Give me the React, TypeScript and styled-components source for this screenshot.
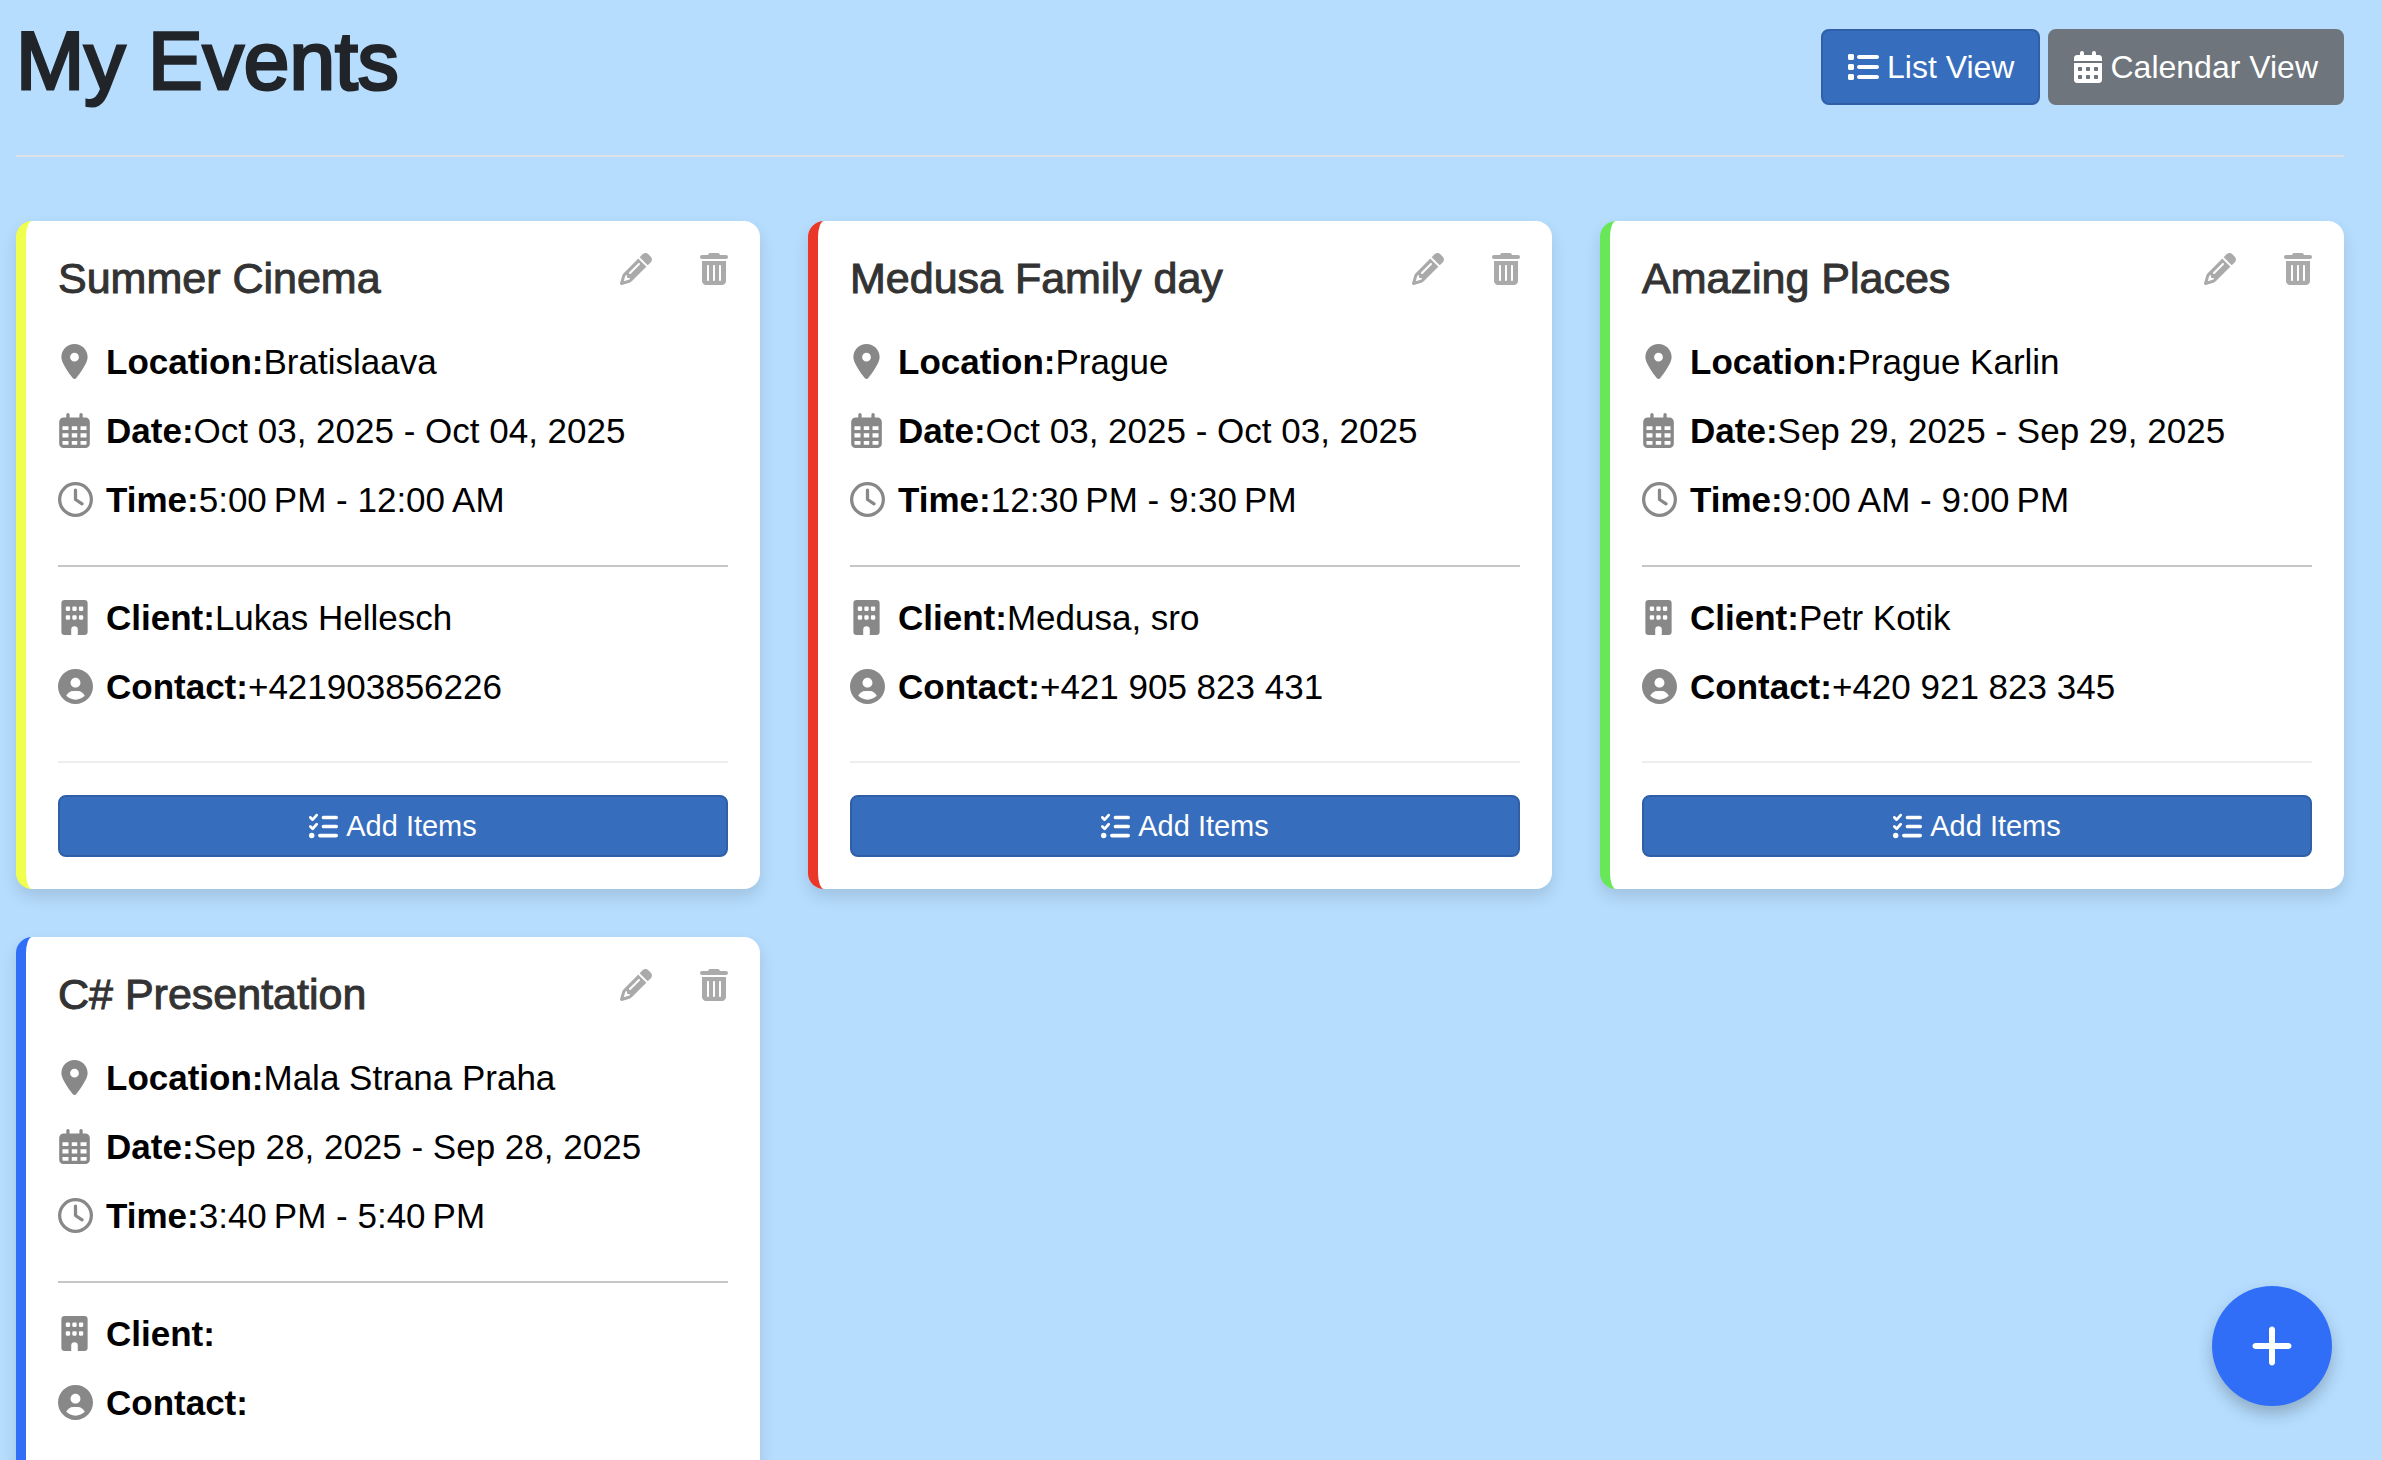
import React from "react";
import styled, { createGlobalStyle } from "styled-components";
import {
  FaCalendarDays,
  FaList,
  FaListCheck,
  FaLocationDot,
  FaPencil,
  FaPlus,
  FaRegClock,
  FaTrashCan,
} from "react-icons/fa6";

const GlobalStyle = createGlobalStyle`
  *, *::before, *::after { box-sizing: border-box; }
  html { background: #b6ddfe; overflow-x: hidden; }
  body {
    margin: 0;
    font-family: "Helvetica Neue", "Liberation Sans", Arial, sans-serif;
    color: #000;
  }
  button { font-family: inherit; cursor: pointer; }
`;

const Page = styled.main`
  padding: 16px 38px 48px 16px;
`;

const Header = styled.header`
  display: flex;
  justify-content: space-between;
  align-items: flex-start;
  padding-bottom: 49px;
  margin-bottom: 64px;
  border-bottom: 2px solid #dee2e6;
`;

const PageTitle = styled.h1`
  margin: 0;
  font-size: 82px;
  font-weight: 400;
  line-height: 90px;
  color: #212529;
  -webkit-text-stroke: 3px currentColor;
`;

const ViewSwitch = styled.div`
  display: flex;
  gap: 8px;
  padding-top: 13px;
`;

const Button = styled.button<{ $tone?: "primary" | "secondary"; $wide?: boolean }>`
  display: flex;
  align-items: center;
  justify-content: center;
  gap: 8px;
  width: ${(p) => (p.$wide ? "100%" : "auto")};
  height: ${(p) => (p.$wide ? 62 : 76)}px;
  padding: 0 ${(p) => (p.$wide ? 16 : 24)}px;
  border: 2px solid ${(p) => (p.$tone === "secondary" ? "#6e757c" : "#2f5fa8")};
  border-radius: 8px;
  background: ${(p) => (p.$tone === "secondary" ? "#6e757c" : "#366dbd")};
  color: #fff;
  font-size: ${(p) => (p.$wide ? 29 : 32)}px;
  line-height: 1;
  white-space: nowrap;

  svg {
    flex: none;
    width: ${(p) => (p.$tone === "secondary" ? "28px" : "1em")};
  }
`;

const Grid = styled.section`
  display: grid;
  grid-template-columns: repeat(auto-fill, minmax(600px, 1fr));
  gap: 48px;
`;

const Card = styled.article<{ $accent: string }>`
  padding: 32px;
  border-left: 10px solid ${(p) => p.$accent};
  border-radius: 16px;
  background: #fff;
  box-shadow: 0 8px 16px rgba(0, 0, 0, 0.12);
`;

const CardHead = styled.div`
  display: flex;
  justify-content: space-between;
  align-items: flex-start;
  margin-bottom: 32px;
`;

const CardTitle = styled.h2`
  margin: 0;
  font-size: 43px;
  font-weight: 400;
  line-height: 50px;
  color: #333;
  -webkit-text-stroke: 1px currentColor;
`;

const CardActions = styled.div`
  display: flex;
  gap: 48px;
`;

const IconButton = styled.button<{ $glyph: number }>`
  display: flex;
  padding: 0;
  border: 0;
  background: none;
  color: #aaa;
  font-size: 32px;

  svg { width: ${(p) => p.$glyph}px; }
`;

const Details = styled.div`
  display: flex;
  flex-direction: column;
  gap: 16px;
`;

const Row = styled.div`
  display: flex;
  align-items: center;
  gap: 16px;
  font-size: 35px;
  line-height: 53px;
`;

const RowIcon = styled.span<{ $round?: boolean }>`
  display: flex;
  flex: none;
  justify-content: ${(p) => (p.$round ? "flex-start" : "center")};
  width: 32px;
  color: #888;

  svg { flex: none; width: 1em; height: 1em; }
`;

const Divider = styled.hr`
  width: 100%;
  height: 2px;
  margin: 39px 0 24px;
  border: 0;
  background: #c6c6c6;
`;

const CardFooter = styled.div`
  margin-top: 48px;
  padding-top: 32px;
  border-top: 2px solid #eee;
`;

const AddButton = styled.button`
  position: fixed;
  right: 50px;
  bottom: 54px;
  display: flex;
  align-items: center;
  justify-content: center;
  width: 120px;
  height: 120px;
  padding: 0;
  border: 0;
  border-radius: 50%;
  background: #306ef7;
  color: #fff;
  font-size: 48px;
  box-shadow: 0 8px 16px rgba(0, 0, 0, 0.22);
`;

function CalendarGridIcon() {
  return (
    <svg viewBox="0 0 448 512" fill="currentColor" aria-hidden>
      <path d="M152 64H296V24C296 10.75 306.7 0 320 0C333.3 0 344 10.75 344 24V64H384C419.3 64 448 92.65 448 128V448C448 483.3 419.3 512 384 512H64C28.65 512 0 483.3 0 448V128C0 92.65 28.65 64 64 64H104V24C104 10.75 114.7 0 128 0C141.3 0 152 10.75 152 24V64zM48 248H136V192H48V248zM48 296V360H136V296H48zM184 296V360H264V296H184zM312 296V360H400V296H312zM400 192H312V248H400V192zM400 408H312V464H384C392.8 464 400 456.8 400 448V408zM264 408H184V464H264V408zM136 408H48V448C48 456.8 55.16 464 64 464H136V408zM264 192H184V248H264V192z" />
    </svg>
  );
}

function ContactIcon() {
  return (
    <svg viewBox="0 0 512 512" fill="currentColor" fillRule="evenodd" aria-hidden>
      <path d="M256 0C114.6 0 0 114.6 0 256s114.6 256 256 256s256-114.6 256-256S397.4 0 256 0zM256 128c39.77 0 72 32.24 72 72S295.8 272 256 272c-39.76 0-72-32.24-72-72S216.2 128 256 128zM256 448c-52.93 0-100.9-21.53-135.7-56.29C136.5 349.9 176.5 320 224 320h64c47.54 0 87.54 29.88 103.7 71.71C356.9 426.5 308.9 448 256 448z" />
    </svg>
  );
}

function BuildingIcon() {
  return (
    <svg viewBox="0 0 384 512" fill="currentColor" fillRule="evenodd" aria-hidden>
      <path d="M48 0H336a48 48 0 0 1 48 48V464a48 48 0 0 1-48 48H240V432a48 48 0 0 0-96 0V512H48a48 48 0 0 1-48-48V48A48 48 0 0 1 48 0zM80 96a16 16 0 0 0-16 16v32a16 16 0 0 0 16 16h32a16 16 0 0 0 16-16v-32a16 16 0 0 0-16-16zM176 96a16 16 0 0 0-16 16v32a16 16 0 0 0 16 16h32a16 16 0 0 0 16-16v-32a16 16 0 0 0-16-16zM272 96a16 16 0 0 0-16 16v32a16 16 0 0 0 16 16h32a16 16 0 0 0 16-16v-32a16 16 0 0 0-16-16zM80 224a16 16 0 0 0-16 16v32a16 16 0 0 0 16 16h32a16 16 0 0 0 16-16v-32a16 16 0 0 0-16-16zM176 224a16 16 0 0 0-16 16v32a16 16 0 0 0 16 16h32a16 16 0 0 0 16-16v-32a16 16 0 0 0-16-16zM272 224a16 16 0 0 0-16 16v32a16 16 0 0 0 16 16h32a16 16 0 0 0 16-16v-32a16 16 0 0 0-16-16z" />
    </svg>
  );
}

type EventItem = {
  title: string;
  accent: string;
  location: string;
  date: string;
  time: string;
  client: string;
  contact: string;
};

const events: EventItem[] = [
  {
    title: "Summer Cinema",
    accent: "#f0ff4d",
    location: "Bratislaava",
    date: "Oct 03, 2025 - Oct 04, 2025",
    time: "5:00\u202fPM - 12:00\u202fAM",
    client: "Lukas Hellesch",
    contact: "+421903856226",
  },
  {
    title: "Medusa Family day",
    accent: "#ea3728",
    location: "Prague",
    date: "Oct 03, 2025 - Oct 03, 2025",
    time: "12:30\u202fPM - 9:30\u202fPM",
    client: "Medusa, sro",
    contact: "+421 905 823 431",
  },
  {
    title: "Amazing Places",
    accent: "#68e858",
    location: "Prague Karlin",
    date: "Sep 29, 2025 - Sep 29, 2025",
    time: "9:00\u202fAM - 9:00\u202fPM",
    client: "Petr Kotik",
    contact: "+420 921 823 345",
  },
  {
    title: "C# Presentation",
    accent: "#306ef7",
    location: "Mala Strana Praha",
    date: "Sep 28, 2025 - Sep 28, 2025",
    time: "3:40\u202fPM - 5:40\u202fPM",
    client: "",
    contact: "",
  },
];

type DetailProps = { icon: React.ComponentType; label: string; value: string; round?: boolean };

function Detail({ icon: Icon, label, value, round }: DetailProps) {
  return (
    <Row>
      <RowIcon $round={round}>
        <Icon />
      </RowIcon>
      <span>
        <strong>{label}:</strong>
        {value}
      </span>
    </Row>
  );
}

function EventCard({ event }: { event: EventItem }) {
  return (
    <Card $accent={event.accent}>
      <CardHead>
        <CardTitle>{event.title}</CardTitle>
        <CardActions>
          <IconButton type="button" aria-label="Edit" $glyph={32}>
            <FaPencil />
          </IconButton>
          <IconButton type="button" aria-label="Delete" $glyph={28}>
            <FaTrashCan />
          </IconButton>
        </CardActions>
      </CardHead>
      <Details>
        <Detail icon={FaLocationDot} label="Location" value={event.location} />
        <Detail icon={CalendarGridIcon} label="Date" value={event.date} />
        <Detail icon={FaRegClock} label="Time" value={event.time} round />
      </Details>
      <Divider />
      <Details>
        <Detail icon={BuildingIcon} label="Client" value={event.client} />
        <Detail icon={ContactIcon} label="Contact" value={event.contact} round />
      </Details>
      <CardFooter>
        <Button type="button" $wide>
          <FaListCheck aria-hidden />
          Add Items
        </Button>
      </CardFooter>
    </Card>
  );
}

export default function App() {
  return (
    <>
      <GlobalStyle />
      <Page>
        <Header>
          <PageTitle>My Events</PageTitle>
          <ViewSwitch>
            <Button type="button">
              <FaList aria-hidden />
              List View
            </Button>
            <Button type="button" $tone="secondary">
              <FaCalendarDays aria-hidden />
              Calendar View
            </Button>
          </ViewSwitch>
        </Header>
        <Grid>
          {events.map((event) => (
            <EventCard key={event.title} event={event} />
          ))}
        </Grid>
      </Page>
      <AddButton type="button" aria-label="Add event">
        <FaPlus />
      </AddButton>
    </>
  );
}
